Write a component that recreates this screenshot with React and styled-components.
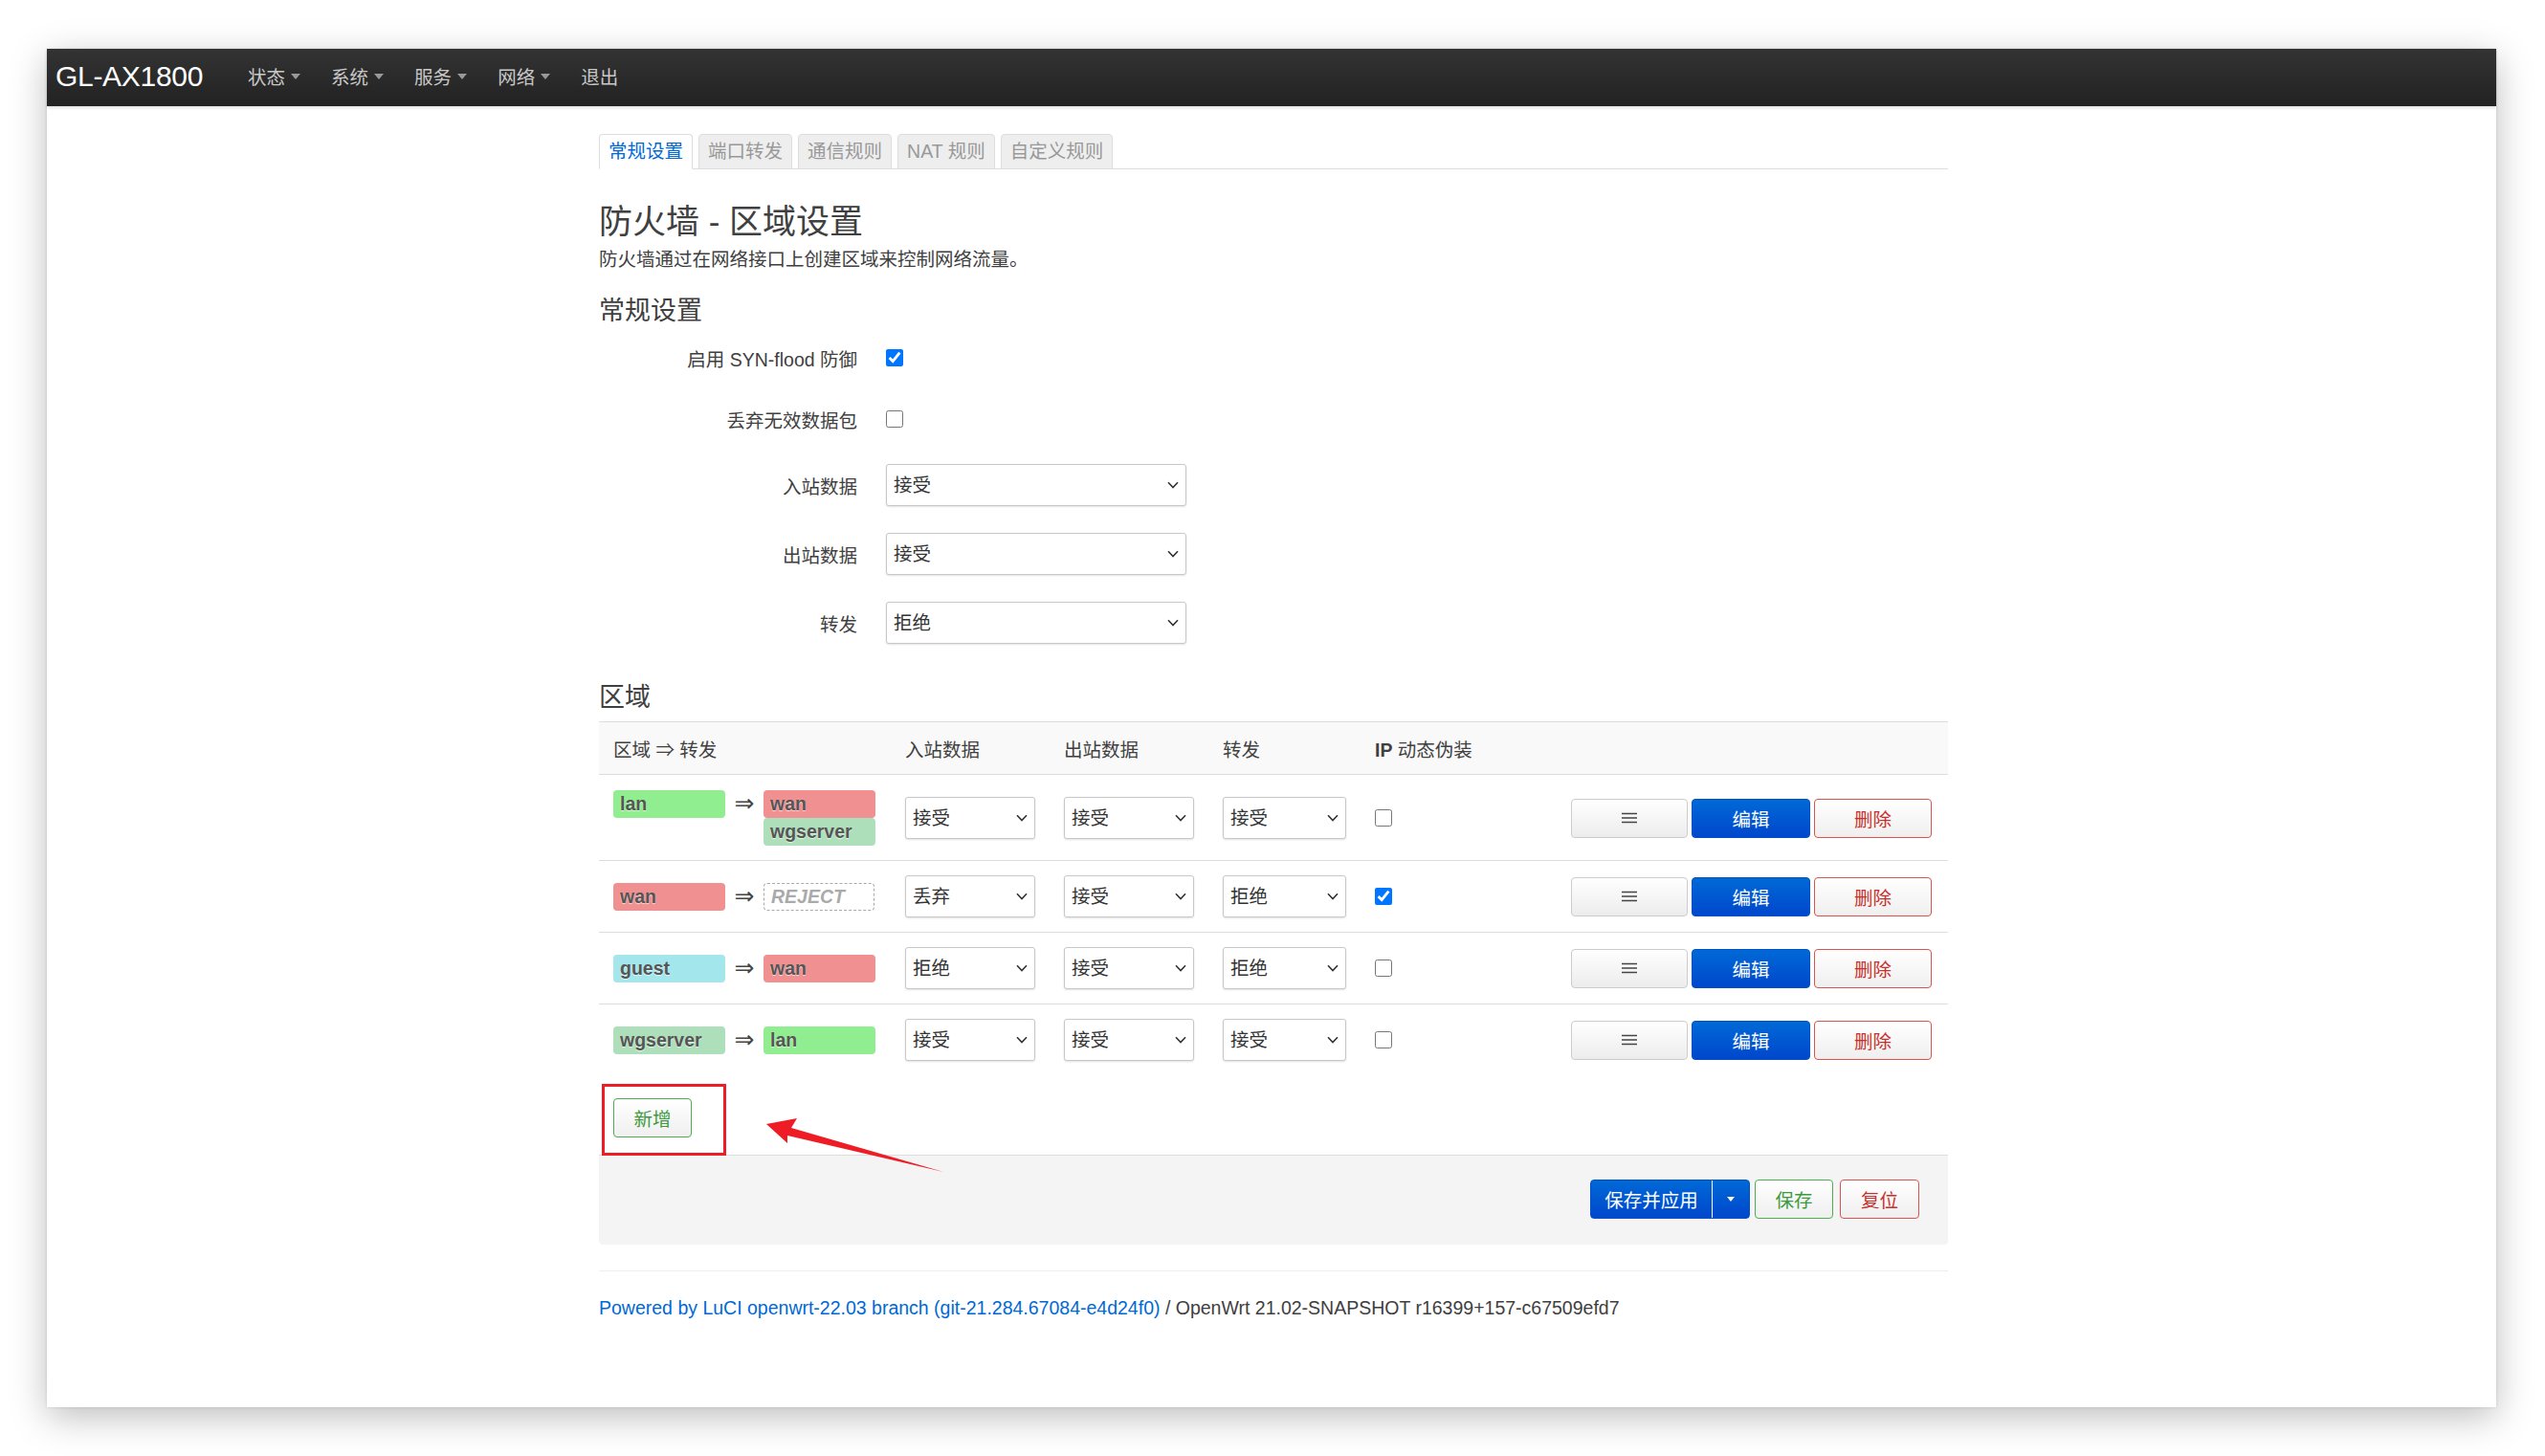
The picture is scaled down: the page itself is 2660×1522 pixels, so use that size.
import React from 'react'
import styled, { createGlobalStyle, css } from 'styled-components'

const GlobalStyle = createGlobalStyle`
  html, body {
    margin: 0;
    padding: 0;
    background: #fff;
  }
  body {
    font-family: "Liberation Sans", "Noto Sans CJK SC", sans-serif;
    font-size: 19.5px;
    color: #404040;
  }
  * {
    box-sizing: border-box;
  }
`

const zoneColors = {
  lan: '#90ee90',
  wan: '#f09090',
  guest: '#a3e6ec',
  wgserver: '#aedfbb',
}

const zones = [
  { name: 'lan', dest: ['wan', 'wgserver'], input: '接受', output: '接受', forward: '接受', masq: false },
  { name: 'wan', dest: null, input: '丢弃', output: '接受', forward: '拒绝', masq: true },
  { name: 'guest', dest: ['wan'], input: '拒绝', output: '接受', forward: '拒绝', masq: false },
  { name: 'wgserver', dest: ['lan'], input: '接受', output: '接受', forward: '接受', masq: false },
]

const policies = ['接受', '拒绝', '丢弃']

const DropSelect = ({ value, width }) => (
  <SelectWrap $width={width}>
    <Select defaultValue={value}>
      {policies.map((p) => (
        <option key={p}>{p}</option>
      ))}
    </Select>
    <Chevron width="12" height="8" viewBox="0 0 12 8">
      <path d="M1 1.2 L6 6.5 L11 1.2" fill="none" stroke="#333" strokeWidth="1.6" />
    </Chevron>
  </SelectWrap>
)

const App = () => {
  return (
    <>
      <GlobalStyle />
      <Page>
        <Window>
          <NavBar>
            <Brand>GL-AX1800</Brand>
            <Menu>
              {['状态', '系统', '服务', '网络'].map((m) => (
                <MenuItem key={m}>
                  {m}
                  <Caret />
                </MenuItem>
              ))}
              <MenuItem>退出</MenuItem>
            </Menu>
          </NavBar>

          <Main>
            <Tabs>
              <Tab $active>常规设置</Tab>
              <Tab>端口转发</Tab>
              <Tab>通信规则</Tab>
              <Tab>NAT 规则</Tab>
              <Tab>自定义规则</Tab>
            </Tabs>

            <Title>防火墙 - 区域设置</Title>
            <Desc>防火墙通过在网络接口上创建区域来控制网络流量。</Desc>

            <SectionTitle $gap={22}>常规设置</SectionTitle>
            <FormRow $h={62}>
              <FieldLabel>启用 SYN-flood 防御</FieldLabel>
              <Check type="checkbox" defaultChecked />
            </FormRow>
            <FormRow $h={66}>
              <FieldLabel>丢弃无效数据包</FieldLabel>
              <Check type="checkbox" />
            </FormRow>
            <FormRow $h={72}>
              <FieldLabel>入站数据</FieldLabel>
              <DropSelect value="接受" width={314} />
            </FormRow>
            <FormRow $h={72}>
              <FieldLabel>出站数据</FieldLabel>
              <DropSelect value="接受" width={314} />
            </FormRow>
            <FormRow $h={72}>
              <FieldLabel>转发</FieldLabel>
              <DropSelect value="拒绝" width={314} />
            </FormRow>

            <SectionTitle $gap={24}>区域</SectionTitle>
            <ZoneTable>
              <thead>
                <tr>
                  <HeadCell $w={305}>区域 ⇒ 转发</HeadCell>
                  <HeadCell $w={166}>入站数据</HeadCell>
                  <HeadCell $w={166}>出站数据</HeadCell>
                  <HeadCell $w={159}>转发</HeadCell>
                  <HeadCell $w={205}>
                    <b>IP</b> 动态伪装
                  </HeadCell>
                  <HeadCell $w={409} />
                </tr>
              </thead>
              <tbody>
                {zones.map((z) => (
                  <tr key={z.name}>
                    <Cell>
                      <ZoneFlow>
                        <ZoneBadge $color={zoneColors[z.name]}>{z.name}</ZoneBadge>
                        <FlowArrow>⇒</FlowArrow>
                        <DestStack>
                          {z.dest ? (
                            z.dest.map((d) => (
                              <ZoneBadge key={d} $color={zoneColors[d]}>
                                {d}
                              </ZoneBadge>
                            ))
                          ) : (
                            <RejectBadge>REJECT</RejectBadge>
                          )}
                        </DestStack>
                      </ZoneFlow>
                    </Cell>
                    <Cell>
                      <DropSelect value={z.input} width={136} />
                    </Cell>
                    <Cell>
                      <DropSelect value={z.output} width={136} />
                    </Cell>
                    <Cell>
                      <DropSelect value={z.forward} width={129} />
                    </Cell>
                    <Cell>
                      <Check type="checkbox" defaultChecked={z.masq} />
                    </Cell>
                    <ActionCell>
                      <RowActions>
                        <Button $variant="neutral" $w={123}>
                          <svg width="16" height="12" viewBox="0 0 16 12">
                            <path d="M0 1.5 H16 M0 6 H16 M0 10.5 H16" stroke="#444" strokeWidth="1.4" />
                          </svg>
                        </Button>
                        <Button $variant="primary" $w={125}>编辑</Button>
                        <Button $variant="negative" $w={124}>删除</Button>
                      </RowActions>
                    </ActionCell>
                  </tr>
                ))}
              </tbody>
            </ZoneTable>

            <AddRow>
              <AddAnchor>
                <Button $variant="positive" $w={82}>新增</Button>
                <Highlight />
                <Pointer width="195" height="65" viewBox="0 0 195 65">
                  <polygon points="6,12 38,6 32,16 191,62 28,24 28,32" fill="#ee1c25" />
                </Pointer>
              </AddAnchor>
            </AddRow>

            <PageActions>
              <SplitButton>
                <SplitMain>保存并应用</SplitMain>
                <SplitToggle>
                  <SmallCaret />
                </SplitToggle>
              </SplitButton>
              <Button $variant="positive" $w={82}>保存</Button>
              <Button $variant="negative" $w={83} $ml={2}>复位</Button>
            </PageActions>

            <Rule />
            <Footer>
              <FooterLink>Powered by LuCI openwrt-22.03 branch (git-21.284.67084-e4d24f0)</FooterLink> / OpenWrt
              21.02-SNAPSHOT r16399+157-c67509efd7
            </Footer>
          </Main>
        </Window>
      </Page>
    </>
  )
}

export default App

const Page = styled.div`
  width: 2660px;
  height: 1522px;
  padding: 51px 51px 0 49px;
  overflow: hidden;
`

const Window = styled.div`
  width: 2560px;
  height: 1420px;
  background: #fff;
  box-shadow: 0 10px 36px rgba(0, 0, 0, 0.26), 0 0 3px rgba(0, 0, 0, 0.12);
`

const NavBar = styled.header`
  height: 60px;
  display: flex;
  align-items: center;
  padding: 0 0 3px 9px;
  background: linear-gradient(#333333, #222222);
  box-shadow: 0 2px 3px rgba(0, 0, 0, 0.12);
`

const Brand = styled.a`
  font-size: 30px;
  color: #fff;
  letter-spacing: -0.3px;
  margin-right: 31px;
`

const Menu = styled.nav`
  display: flex;
  align-items: center;
`

const MenuItem = styled.a`
  display: flex;
  align-items: center;
  gap: 6px;
  padding: 0 16px;
  color: #c8c8c8;
  font-size: 19.5px;
  cursor: pointer;
`

const Caret = styled.span`
  width: 0;
  height: 0;
  border-left: 5.5px solid transparent;
  border-right: 5.5px solid transparent;
  border-top: 6px solid #999;
`

const Main = styled.main`
  width: 1410px;
  margin-left: 577px;
  padding-top: 29px;
`

const Tabs = styled.ul`
  display: flex;
  gap: 6px;
  margin: 0;
  padding: 0;
  list-style: none;
  border-bottom: 1px solid #ddd;
`

const Tab = styled.li`
  height: 37px;
  line-height: 35px;
  padding: 0 9px;
  margin-bottom: -1px;
  border: 1px solid #ddd;
  border-radius: 4px 4px 0 0;
  font-size: 19.5px;
  cursor: pointer;
  ${({ $active }) =>
    $active
      ? css`
          background: #fff;
          color: #0069d6;
          border-bottom-color: #fff;
        `
      : css`
          background: #eee;
          color: #999;
        `}
`

const Title = styled.h2`
  margin: 35px 0 0;
  font-size: 35px;
  line-height: 40px;
  font-weight: normal;
  color: #404040;
`

const Desc = styled.p`
  margin: 6px 0 0;
  font-size: 19.5px;
  line-height: 27px;
`

const SectionTitle = styled.h3`
  margin: ${({ $gap }) => $gap ?? 23}px 0 0;
  font-size: 27px;
  line-height: 36px;
  font-weight: normal;
  color: #404040;
`

const FormRow = styled.div`
  display: flex;
  align-items: center;
  height: ${({ $h }) => $h}px;
`

const FieldLabel = styled.label`
  width: 270px;
  margin-right: 30px;
  text-align: right;
  font-size: 19.5px;
`

const Check = styled.input`
  display: block;
  width: 18px;
  height: 18px;
  margin: 0;
  accent-color: #0075ff;
`

const SelectWrap = styled.div`
  position: relative;
  width: ${({ $width }) => $width}px;
  height: 44px;
`

const Select = styled.select`
  appearance: none;
  width: 100%;
  height: 100%;
  padding: 0 26px 0 7px;
  border: 1px solid #c8c8c8;
  border-radius: 3px;
  background: #fff;
  box-shadow: 0 1px 2px rgba(0, 0, 0, 0.12);
  font-family: inherit;
  font-size: 19.5px;
  color: #333;
`

const Chevron = styled.svg`
  position: absolute;
  right: 8px;
  top: 50%;
  margin-top: -4px;
  pointer-events: none;
`

const ZoneTable = styled.table`
  width: 1410px;
  margin-top: 7px;
  border-collapse: collapse;
  table-layout: fixed;

  tbody tr:first-child td {
    padding-top: 16px;
  }

  tbody tr:last-child td {
    border-bottom: none;
  }
`

const HeadCell = styled.th`
  width: ${({ $w }) => $w}px;
  height: 55px;
  padding: 0 15px;
  text-align: left;
  font-weight: normal;
  background: #f9f9f9;
  border-top: 1px solid #ddd;
  border-bottom: 1px solid #ddd;
`

const Cell = styled.td`
  padding: 15px;
  vertical-align: middle;
  border-bottom: 1px solid #ddd;
`

const ActionCell = styled(Cell)`
  padding-right: 17px;
`

const ZoneFlow = styled.div`
  display: flex;
  align-items: flex-start;
`

const ZoneBadge = styled.div`
  width: 117px;
  height: 29px;
  line-height: 29px;
  padding: 0 7px;
  border-radius: 4px;
  background: ${({ $color }) => $color};
  color: #555;
  font-weight: bold;
  text-shadow: 0 1px 1px rgba(255, 255, 255, 0.7);
`

const FlowArrow = styled.span`
  width: 40px;
  line-height: 27px;
  text-align: center;
  font-family: "DejaVu Sans", sans-serif;
  font-size: 25px;
  color: #444;
`

const DestStack = styled.div`
  display: flex;
  flex-direction: column;
  width: 116px;
`

const RejectBadge = styled.div`
  height: 29px;
  line-height: 27px;
  padding: 0 7px;
  border: 1px dashed #aaa;
  border-radius: 4px;
  color: #aaa;
  font-style: italic;
  font-weight: bold;
`

const RowActions = styled.div`
  display: flex;
  justify-content: flex-end;
  gap: 4px;
`

const variants = {
  neutral: css`
    background: linear-gradient(#fff, #ececec);
    border: 1px solid #ccc;
    color: #333;
  `,
  primary: css`
    background: linear-gradient(#0069d6, #0047cc);
    border: 1px solid #0050c8;
    color: #fff;
  `,
  negative: css`
    background: linear-gradient(#fff, #efefef);
    border: 1px solid #d9534f;
    color: #c9302c;
  `,
  positive: css`
    background: linear-gradient(#fff, #efefef);
    border: 1px solid #4cae4c;
    color: #3d9a3d;
  `,
}

const Button = styled.button`
  display: inline-flex;
  align-items: center;
  justify-content: center;
  width: ${({ $w }) => $w}px;
  height: 41px;
  margin-left: ${({ $ml }) => $ml || 0}px;
  padding: 0;
  border-radius: 4px;
  font-family: inherit;
  font-size: 19.5px;
  cursor: pointer;
  ${({ $variant }) => variants[$variant]}
`

const AddRow = styled.div`
  padding: 24px 0 18px 15px;
`

const AddAnchor = styled.div`
  position: relative;
  display: inline-block;
  vertical-align: top;

  button {
    display: flex;
  }
`

const Highlight = styled.div`
  position: absolute;
  left: -12px;
  top: -15px;
  width: 130px;
  height: 75px;
  border: 3px solid #ee1c25;
  z-index: 2;
  pointer-events: none;
`

const Pointer = styled.svg`
  position: absolute;
  left: 154px;
  top: 15px;
  z-index: 2;
  pointer-events: none;
`

const PageActions = styled.div`
  display: flex;
  justify-content: flex-end;
  gap: 5px;
  padding: 25px 30px 27px;
  background: #f4f4f4;
  border-top: 1px solid #ddd;
  border-radius: 0 0 4px 4px;
`

const SplitButton = styled.div`
  display: flex;
  height: 41px;
  border: 1px solid #0050c8;
  border-radius: 4px;
  overflow: hidden;
  background: linear-gradient(#0069d6, #0047cc);
`

const SplitMain = styled.button`
  width: 127px;
  padding: 0;
  border: none;
  border-right: 1px solid #fff;
  background: transparent;
  color: #fff;
  font-family: inherit;
  font-size: 19.5px;
  cursor: pointer;
`

const SplitToggle = styled.button`
  width: 38px;
  display: flex;
  align-items: center;
  justify-content: center;
  padding: 0;
  border: none;
  background: transparent;
  cursor: pointer;
`

const SmallCaret = styled.span`
  width: 0;
  height: 0;
  border-left: 4px solid transparent;
  border-right: 4px solid transparent;
  border-top: 5px solid #fff;
`

const Rule = styled.hr`
  margin: 27px 0 0;
  border: none;
  border-top: 1px solid #eee;
`

const Footer = styled.footer`
  margin-top: 25px;
  font-size: 19.5px;
  line-height: 27px;
  color: #404040;
`

const FooterLink = styled.a`
  color: #0069d6;
  text-decoration: none;
`
